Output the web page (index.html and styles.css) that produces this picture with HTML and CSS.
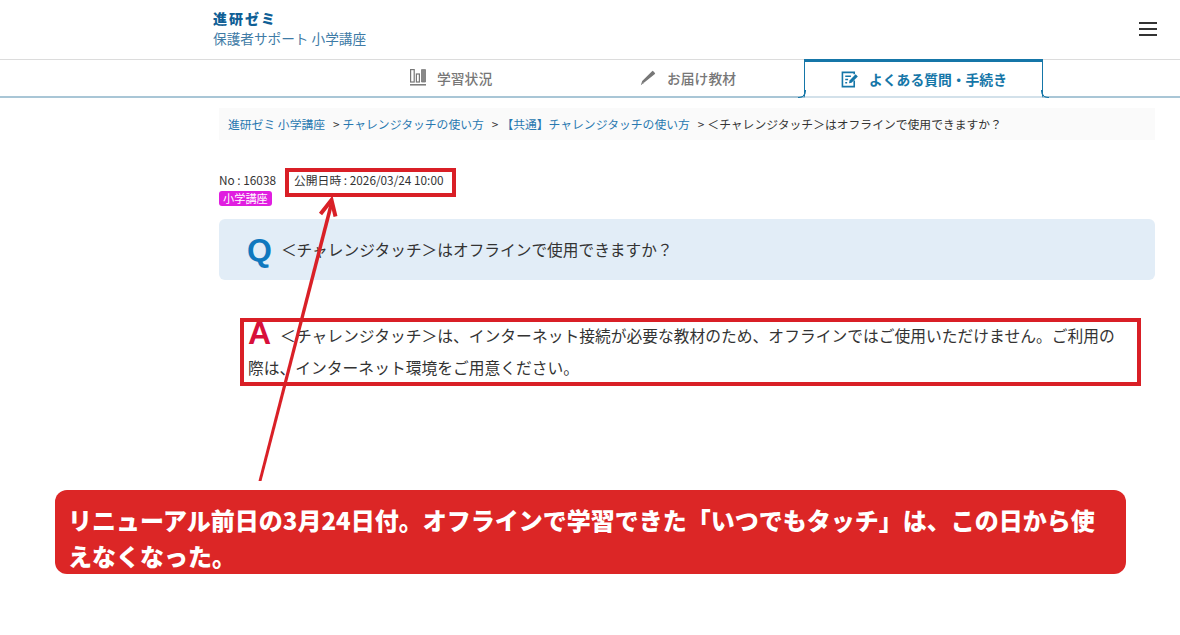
FILE: index.html
```html
<!DOCTYPE html>
<html lang="ja">
<head>
<meta charset="utf-8">
<title>保護者サポート 小学講座</title>
<link rel="stylesheet" href="styles.css">
</head>
<body>
<header class="site-header">
  <div class="brand">
    <div class="brand-name">進研ゼミ</div>
    <div class="brand-sub">保護者サポート 小学講座</div>
  </div>
  <button class="menu" aria-label="menu"><span></span><span></span><span></span></button>
</header>
<nav class="tabs">
  <a class="tab tab-study">
    <svg class="tab-icon" viewBox="0 0 16 17" width="16" height="17" fill="none" stroke="#777" stroke-width="1.2"><rect x=".6" y=".6" width="3.6" height="12.4"/><rect x="6.4" y="5" width="3" height="8"/><path d="M11.500 .6h4v12.400h-4z" fill="#888" stroke-width=".8"/><path d="M0 15.800h16" stroke-width="1.500"/></svg>
    <span>学習状況</span>
  </a>
  <a class="tab tab-material">
    <svg class="tab-icon" viewBox="0 0 16 16" width="16" height="16" fill="#777"><path d="M.8 15.200l1.400-4.200L11.800 1.400l1-.6 2.400 2.400-.6 1z M3 12.500l-.5 1.500 1.500-.5z"/></svg>
    <span>お届け教材</span>
  </a>
  <a class="tab tab-active">
    <svg class="tab-icon" viewBox="0 0 18 18" width="17" height="17" fill="none" stroke="#1576a8" stroke-width="1.700"><path d="M14 10v6.500H1.500V1.500H14v2"/><path d="M4.500 5.500h6M4.500 9h3M4.500 12.500h2"/><path d="M8.500 13l.5-3L15.500 3.500l2.300 2.300L11.200 12.400z" fill="#1576a8" stroke="none"/></svg>
    <span>よくある質問・手続き</span>
  </a>
</nav>
<main class="content">
  <div class="crumbs"><a>進研ゼミ 小学講座</a><i>&gt;</i><a>チャレンジタッチの使い方</a><i>&gt;</i><a>【共通】チャレンジタッチの使い方</a><i>&gt;</i><span>＜チャレンジタッチ＞はオフラインで使用できますか？</span></div>
  <div class="meta"><span class="no">No : 16038</span><span class="date">公開日時 : 2026/03/24 10:00</span></div>
  <div class="tag">小学講座</div>
  <section class="question"><span class="q-mark">Q</span><span>＜チャレンジタッチ＞はオフラインで使用できますか？</span></section>
  <section class="answer"><span class="a-mark">A</span>＜チャレンジタッチ＞は、インターネット接続が必要な教材のため、オフラインではご使用いただけません。ご利用の際は、インターネット環境をご用意ください。</section>
</main>
<div class="caption">リニューアル前日の3月24日付。オフラインで学習できた「いつでもタッチ」は、この日から使えなくなった。</div>
<div class="mark mark-date"></div>
<div class="mark mark-answer"></div>
<svg class="arrow" width="1180" height="635" viewBox="0 0 1180 635" fill="none"><path d="M258.500 481L261.500 481L333 205L329.500 204z" fill="#d92027"/><path d="M320.500 214L331.500 200L335.500 216.500" stroke="#d92027" stroke-width="4"/></svg>
</body>
</html>
```
FILE: styles.css
```css
* { box-sizing: border-box; }
html, body { margin: 0; padding: 0; }
body {
  position: relative;
  width: 1180px;
  height: 635px;
  overflow: hidden;
  background: #fff;
  color: #333;
  font-family: "Noto Sans CJK JP", "Noto Sans", sans-serif;
}
.site-header {
  height: 60px;
  padding: 8px 23px 0 213px;
  display: flex;
  justify-content: space-between;
  border-bottom: 1px solid #dcdcdc;
}
.brand-name { font-size: 14px; line-height: 20px; font-weight: 900; color: #0f5f96; letter-spacing: 2px; }
.brand-sub { font-size: 13.650px; line-height: 21px; color: #3e7ba6; }
.menu {
  width: 18px; height: 14px; margin-top: 14px; padding: 0; border: 0; background: none;
  display: flex; flex-direction: column; justify-content: space-between;
}
.menu span { display: block; height: 2px; background: #333; }
.tabs {
  height: 39px;
  margin-top: -1px;
  padding-left: 410px;
  display: flex;
  border-bottom: 2px solid #a9c6d6;
}
.tab {
  display: flex; align-items: center; gap: 11px;
  font-size: 13.800px; color: #777; font-weight: 500;
}
.tab-study { width: 230px; }
.tab-material { width: 164px; }
.tab-active {
  position: relative;
  width: 239px;
  height: 39px;
  padding-left: 36px;
  color: #1576a8;
  font-weight: 700;
  background: #fff;
  border: 1px solid #1576a8;
  border-top: 3px solid #1576a8;
  border-bottom: 2px solid #d3e1ea;
}
.tab-active::before, .tab-active::after {
  content: "";
  position: absolute;
  bottom: -2px;
  width: 7px;
  height: 7px;
  border-bottom: 1.500px solid #1576a8;
}
.tab-active::before { left: -7px; border-right: 1px solid #1576a8; border-bottom-right-radius: 7px; }
.tab-active::after { right: -7px; border-left: 1px solid #1576a8; border-bottom-left-radius: 7px; }
.content { padding: 10px 25px 0 219px; }
.crumbs {
  height: 32px;
  padding: 0 0 2px 9px;
  display: flex; align-items: center;
  background: #fafafa;
  font-size: 11.800px;
  color: #333;
}
.crumbs a { color: #2878b0; }
.crumbs i { font-style: normal; margin: 0 3px 0 8px; }
.meta { margin-top: 31px; display: flex; font-size: 11.800px; line-height: 17px; color: #333; }
.no { width: 75px; }
.tag {
  width: 53px; height: 15px; margin-top: 3px; padding-left: 4px;
  border-radius: 3px;
  background: #e01ee0;
  color: #fff;
  font-size: 11.200px; line-height: 15px;
}
.question {
  height: 61px;
  margin-top: 13px;
  padding-left: 28px;
  display: flex; align-items: center; gap: 9px;
  border-radius: 6px;
  background: #e2edf7;
  font-size: 15.700px;
}
.q-mark, .a-mark { font-family: "Liberation Sans", sans-serif; font-weight: 700; font-size: 32px; line-height: 1; }
.q-mark { color: #0f78be; }
.a-mark { color: #d8103a; margin-right: 9px; vertical-align: -2px; }
.answer {
  margin: 37px 40px 0 29px;
  font-size: 15.780px;
  line-height: 32px;
}
.caption {
  position: absolute; left: 55px; top: 490px;
  width: 1071px; height: 84px;
  padding: 12px 13px 0;
  border-radius: 12px;
  background: #dc2626;
  color: #fff;
  font-size: 24px; font-weight: 900; line-height: 35.500px;
}
.mark { position: absolute; border: 4px solid #d91f26; }
.mark-date { left: 285px; top: 168px; width: 171px; height: 29px; }
.mark-answer { left: 240px; top: 318px; width: 901px; height: 68px; }
.arrow { position: absolute; left: 0; top: 0; }
```
